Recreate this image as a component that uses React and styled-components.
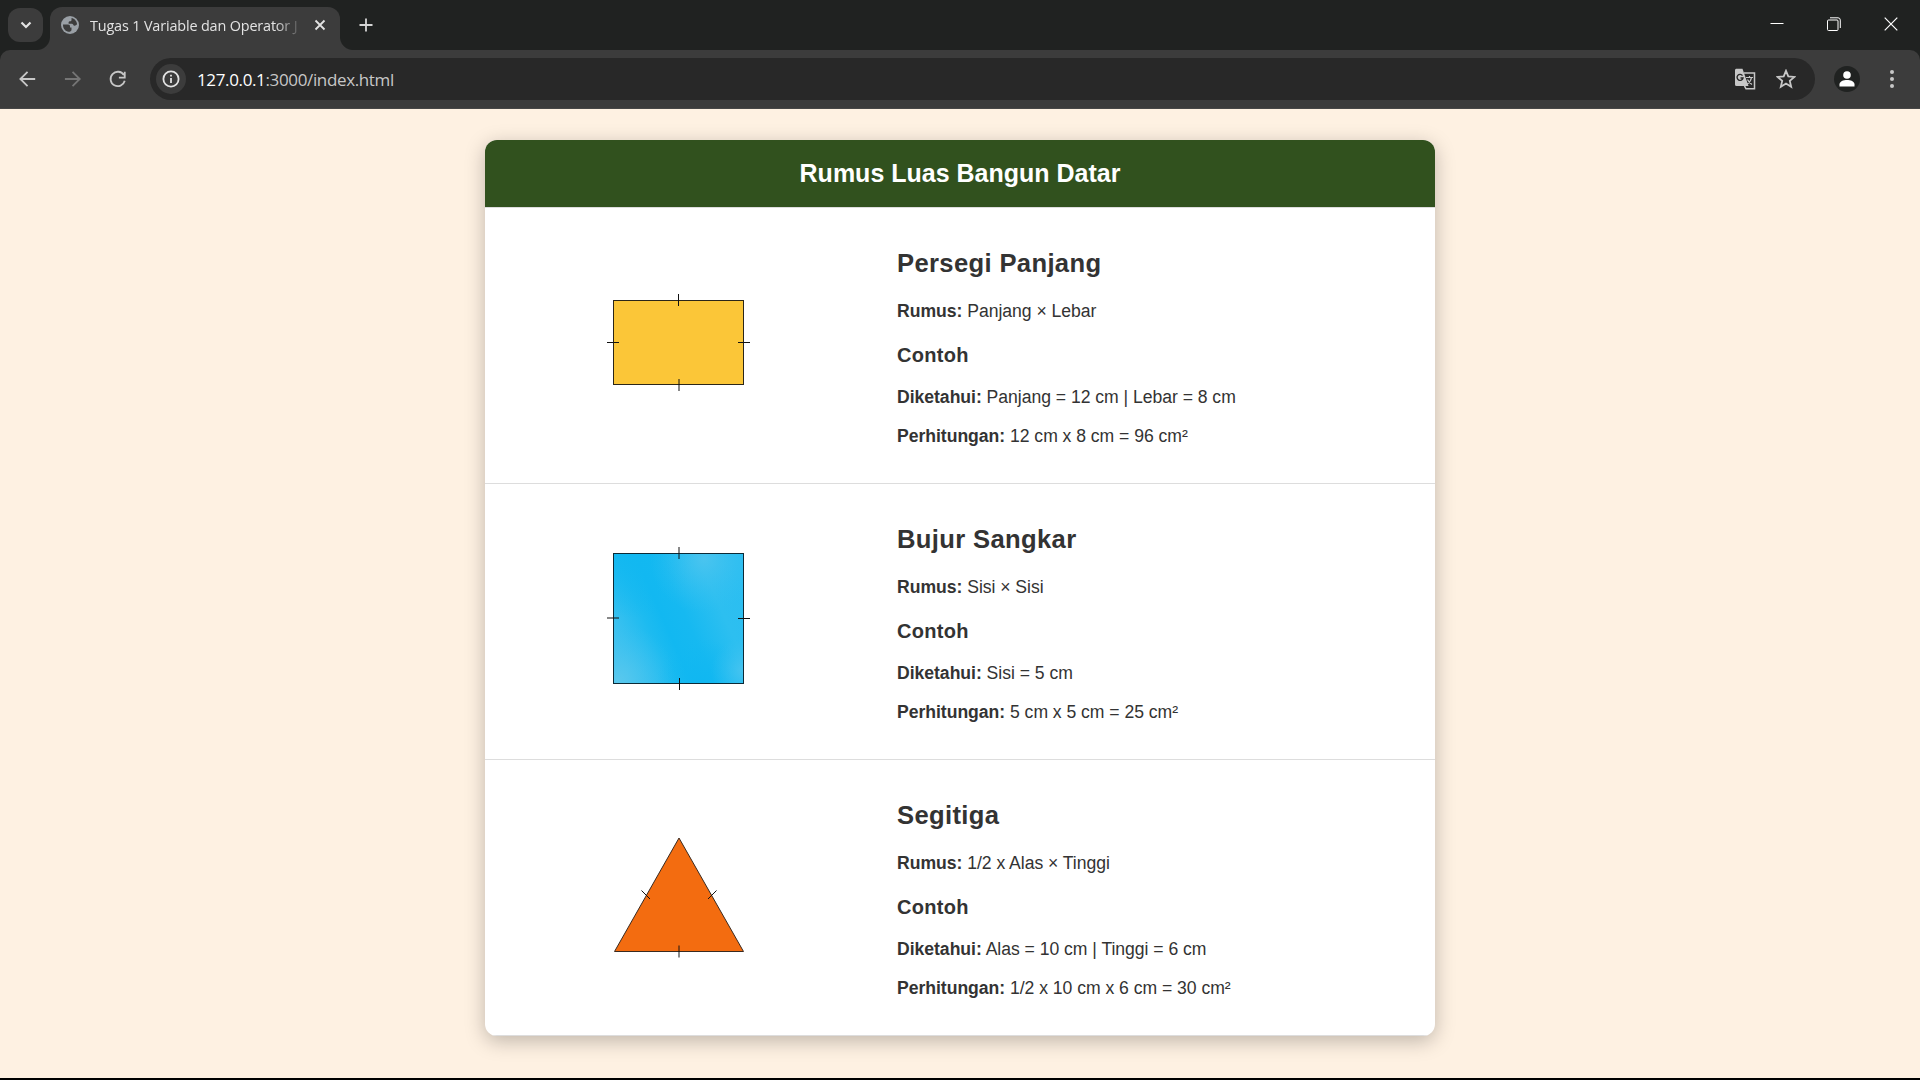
import React from 'react';
import styled, { createGlobalStyle } from 'styled-components';

const Global = createGlobalStyle`
  * { box-sizing: border-box; }
  body { margin: 0; background: #000; overflow: hidden; }
`;

const Window = styled.div`
  display: flex;
  flex-direction: column;
  width: 1920px;
  height: 1080px;
  font-family: 'Open Sans', 'Noto Sans', sans-serif;
  background: #000;
`;

const TabStrip = styled.div`
  display: flex;
  height: 50px;
  padding-left: 8px;
  background: #202221;
`;

const TabSearch = styled.div`
  display: grid;
  place-items: center;
  width: 35px;
  height: 34px;
  margin-top: 8px;
  border-radius: 12px;
  background: #3c3c3c;
`;

const Tab = styled.div`
  position: relative;
  display: flex;
  align-items: center;
  width: 290px;
  height: 43px;
  margin: 7px 0 0 7px;
  padding: 0 0 7px 11px;
  border-radius: 12px 12px 0 0;
  background: #3c3c3c;
  &::before,
  &::after {
    content: '';
    position: absolute;
    bottom: 0;
    width: 13px;
    height: 13px;
  }
  &::before {
    left: -13px;
    background: radial-gradient(circle at 0 0, transparent 12.5px, #3c3c3c 13.5px);
  }
  &::after {
    right: -13px;
    background: radial-gradient(circle at 100% 0, transparent 12.5px, #3c3c3c 13.5px);
  }
`;

const TabTitle = styled.span`
  width: 212px;
  margin-left: 11px;
  padding-top: 2px;
  white-space: nowrap;
  font-size: 14.4px;
  line-height: 20px;
  letter-spacing: -0.15px;
  color: #e3e3e3;
  mask-image: linear-gradient(90deg, #000 185px, transparent 213px);
`;

const TabClose = styled.span`
  display: flex;
  margin-left: 12px;
`;

const NewTab = styled.div`
  display: flex;
  margin: 18px 0 0 19px;
  height: 14px;
`;

const WindowButtons = styled.div`
  display: flex;
  align-items: center;
  gap: 43px;
  margin-left: auto;
  padding: 0 22px 2px 0;
`;

const ToolbarBack = styled.div`
  height: 59px;
  background: #202221;
`;

const Toolbar = styled.div`
  display: flex;
  align-items: center;
  height: 59px;
  padding: 0 20px 1px 19px;
  border-radius: 10px 10px 0 0;
  border-bottom: 1px solid #474747;
  background: #3c3c3c;
`;

const NavIcons = styled.div`
  display: flex;
  align-items: center;
  gap: 27px;
  width: 131px;
`;

const AddressBar = styled.div`
  display: flex;
  align-items: center;
  width: 1665px;
  height: 42px;
  padding: 0 19px 0 6px;
  border-radius: 21px;
  background: #282828;
`;

const SiteInfo = styled.div`
  display: grid;
  place-items: center;
  width: 30px;
  height: 30px;
  border-radius: 50%;
  background: #3c3c3c;
`;

const Url = styled.span`
  margin-left: 11px;
  padding-top: 2px;
  font-size: 17px;
  line-height: 24px;
  letter-spacing: -0.36px;
  color: #c7c7c7;
  b { font-weight: 400; color: #fff; }
`;

const BarActions = styled.div`
  display: flex;
  align-items: center;
  gap: 20px;
  margin-left: auto;
`;

const Profile = styled.div`
  display: grid;
  place-items: center;
  width: 26px;
  height: 26px;
  margin-left: 19px;
  border-radius: 50%;
  background: #202221;
`;

const MenuDots = styled.svg`
  margin-left: auto;
  margin-right: 6px;
`;

const Page = styled.main`
  display: flex;
  justify-content: center;
  align-items: flex-start;
  height: 969px;
  padding-top: 31px;
  background: #fef1e2;
  font-family: Arial, 'Liberation Sans', sans-serif;
  color: #333;
`;

const Card = styled.section`
  width: 950px;
  height: 896px;
  border-radius: 12px;
  overflow: hidden;
  background: #fff;
  box-shadow: 0 5px 20px rgba(0, 0, 0, 0.25);
`;

const CardHeader = styled.h1`
  height: 68px;
  margin: 0;
  border-bottom: 1px solid #ddd;
  text-align: center;
  font-size: 25px;
  font-weight: 700;
  line-height: 67px;
  color: #fff;
  background: #31511e;
`;

const Row = styled.article`
  display: grid;
  grid-template-columns: 387px 1fr;
  height: 276px;
  border-bottom: 1px solid #ddd;
`;

const Figure = styled.div`
  display: grid;
  place-items: center;
  padding: 0 1px 7px 0;
`;

const Details = styled.div`
  padding: 39px 25px 0;
`;

const ShapeName = styled.h2`
  margin: 0 0 20px;
  font-size: 25.6px;
  line-height: 32px;
  letter-spacing: 0.35px;
`;

const ExampleTitle = styled.h3`
  margin: 20px 0 18px;
  font-size: 20px;
  line-height: 24px;
  letter-spacing: 0.3px;
`;

const Line = styled.p`
  margin: 0 0 15px;
  font-size: 17.6px;
  line-height: 24px;
  letter-spacing: -0.03px;
`;

const ink = { stroke: '#111', strokeWidth: 1 };

const Rectangle = () => (
  <svg width="150" height="110" viewBox="0 0 150 110">
    <rect x="10.5" y="13.5" width="130" height="84" fill="#fbc638" stroke="#2b2618" />
    <path d="M75.5 7v12M4 55.5h12M135 55.5h12" {...ink} />
    <path d="M76 92v12" stroke="#111" strokeOpacity=".5" strokeWidth="2" />
  </svg>
);

const Square = () => (
  <svg width="150" height="150" viewBox="0 0 150 150">
    <defs>
      <linearGradient id="sheen" x1="0" y1=".72" x2="1" y2=".28">
        <stop offset="0" stopColor="#45c3ef" />
        <stop offset=".28" stopColor="#1dbbf0" />
        <stop offset=".4" stopColor="#12b8f1" />
        <stop offset=".55" stopColor="#16b9f1" />
        <stop offset=".8" stopColor="#2dbff0" />
        <stop offset="1" stopColor="#2bbef1" />
      </linearGradient>
      <radialGradient id="glowTop" cx=".7" cy=".04" r=".42">
        <stop offset="0" stopColor="#4fc5ef" stopOpacity=".85" />
        <stop offset="1" stopColor="#35c0f0" stopOpacity="0" />
      </radialGradient>
      <radialGradient id="glowLeft" cx=".03" cy=".98" r=".45">
        <stop offset="0" stopColor="#5ac8ed" />
        <stop offset="1" stopColor="#35c0f0" stopOpacity="0" />
      </radialGradient>
      <radialGradient id="glowRight" cx="1" cy=".9" r=".25">
        <stop offset="0" stopColor="#46c4f0" />
        <stop offset="1" stopColor="#35c0f0" stopOpacity="0" />
      </radialGradient>
      <radialGradient id="deepCorner" cx=".12" cy="0" r=".5">
        <stop offset="0" stopColor="#12b8f1" />
        <stop offset="1" stopColor="#12b8f1" stopOpacity="0" />
      </radialGradient>
      <radialGradient id="deepBase" cx=".68" cy="1" r=".35">
        <stop offset="0" stopColor="#10b7f1" />
        <stop offset="1" stopColor="#12b8f1" stopOpacity="0" />
      </radialGradient>
    </defs>
    {['sheen', 'deepCorner', 'deepBase', 'glowTop', 'glowLeft', 'glowRight'].map((id) => (
      <rect key={id} x="10.5" y="10.5" width="130" height="130" fill={`url(#${id})`} />
    ))}
    <rect x="10.5" y="10.5" width="130" height="130" fill="none" stroke="#0c2a36" />
    <path d="M135 75.5h12M76.5 135v12" {...ink} />
    <path d="M76 4v12M4 75h12" stroke="#111" strokeOpacity=".5" strokeWidth="2" />
  </svg>
);

const Triangle = () => (
  <svg width="150" height="150" viewBox="0 0 150 150">
    <path d="M76 19L140.5 132.5H11.5Z" fill="#f36c10" stroke="#3a2a20" />
    <path d="M38.5 71.5l8.500 8.500M113.5 71.5l-8.500 8.500" {...ink} />
    <path d="M76 126.5v12" stroke="#111" strokeOpacity=".65" strokeWidth="1.5" />
  </svg>
);

const shapes = [
  {
    name: 'Persegi Panjang',
    Drawing: Rectangle,
    formula: 'Panjang × Lebar',
    given: 'Panjang = 12 cm | Lebar = 8 cm',
    result: '12 cm x 8 cm = 96 cm²',
  },
  {
    name: 'Bujur Sangkar',
    Drawing: Square,
    formula: 'Sisi × Sisi',
    given: 'Sisi = 5 cm',
    result: '5 cm x 5 cm = 25 cm²',
  },
  {
    name: 'Segitiga',
    Drawing: Triangle,
    formula: '1/2 x Alas × Tinggi',
    given: 'Alas = 10 cm | Tinggi = 6 cm',
    result: '1/2 x 10 cm x 6 cm = 30 cm²',
  },
];

const Svg = ({ size = 20, color = '#c7c7c7', width = 2, children }) => (
  <svg width={size} height={size} viewBox="0 0 20 20" fill="none" stroke={color} strokeWidth={width}>
    {children}
  </svg>
);

function BrowserChrome() {
  return (
    <>
      <TabStrip>
        <TabSearch>
          <Svg color="#e3e3e3" width={2.2}><path d="M5.5 7.5l4.500 4.500 4.500-4.500" /></Svg>
        </TabSearch>
        <Tab>
          <svg width="18" height="18" viewBox="0 0 18 18">
            <circle cx="9" cy="9" r="9" fill="#9aa0a6" />
            <path
              d="M2 8.500h5c1.600 0 2 .8 2 2v1h1.500v2.600c0 .6-.7.900-1.500 1.700C5 16 1.800 13 2 8.500zM10.500 2c3 .4 5.300 3.200 5.600 6.300-.8.900-1.700 1.500-2.600 1.400-1.500 0-1-1.700-2.400-1.900H7.600V6.500c0-1 .6-1.300 2-1.300.9 0 1-.7.900-3.200z"
              fill="#3c3c3c"
            />
          </svg>
          <TabTitle>Tugas 1 Variable dan Operator J</TabTitle>
          <TabClose>
            <svg width="12" height="12" viewBox="0 0 12 12" stroke="#e3e3e3" strokeWidth="1.8">
              <path d="M1.5 1.5l9 9M10.5 1.5l-9 9" />
            </svg>
          </TabClose>
        </Tab>
        <NewTab>
          <svg width="14" height="14" viewBox="0 0 14 14" stroke="#d5d5d5" strokeWidth="1.8">
            <path d="M7 .5v13M.5 7h13" />
          </svg>
        </NewTab>
        <WindowButtons>
          <svg width="14" height="14" viewBox="0 0 14 14"><path d="M.5 6.500h13" stroke="#fff" /></svg>
          <svg width="14" height="14" viewBox="0 0 14 14" fill="none" stroke="#fff">
            <rect x=".5" y="3" width="10.5" height="10.5" rx="1" />
            <path d="M3 .8h8a2.300 2.300 0 0 1 2.300 2.300V11" />
          </svg>
          <svg width="14" height="14" viewBox="0 0 14 14" stroke="#fff" strokeWidth="1.2">
            <path d="M.7.7l12.600 12.600M13.300.7L.7 13.300" />
          </svg>
        </WindowButtons>
      </TabStrip>
      <ToolbarBack>
        <Toolbar>
          <NavIcons>
            <Svg size={18}><path d="M18 10H2M9.500 2L1.500 10l8 8" /></Svg>
            <Svg size={18} color="#757575"><path d="M1 10h16.500M9.500 2l8 8-8 8" /></Svg>
            <Svg size={18}><path d="M16.500 5.600A8 8 0 1 0 17.500 12M17.500 2v6.500H11" /></Svg>
          </NavIcons>
          <AddressBar>
            <SiteInfo>
              <svg width="18" height="18" viewBox="0 0 18 18" fill="none" stroke="#e3e3e3" strokeWidth="1.8">
                <circle cx="9" cy="9" r="7.6" />
                <path d="M9 8v5M9 4.800v1.800" />
              </svg>
            </SiteInfo>
            <Url><b>127.0.0.1</b>:3000/index.html</Url>
            <BarActions>
              <svg width="22" height="22" viewBox="0 0 22 22">
                <path d="M2 .8h6.500L14.500 18H2.500A1.500 1.500 0 0 1 1 16.500v-14A1.500 1.500 0 0 1 2 .8z" fill="#c7c7c7" />
                <path d="M10 5h10.500v15.800H12l-1.500-3" fill="none" stroke="#c7c7c7" strokeWidth="1.5" />
                <path d="M8.500 7.600A3 3 0 1 0 9 10H6.500" fill="none" stroke="#282828" strokeWidth="1.4" />
                <path d="M12 9.500h7M15.500 8v1.500M17.500 9.500c-.5 3-2.500 5.500-4.500 7M13.500 11.500c1 2 2.500 3.800 4.500 5" fill="none" stroke="#c7c7c7" strokeWidth="1.2" />
              </svg>
              <Svg width={1.8}>
                <path d="M10 1.800l2.300 5.600 6.100.5-4.600 4 1.400 5.900-5.200-3.200-5.200 3.200 1.400-5.900-4.600-4 6.100-.5z" />
              </Svg>
            </BarActions>
          </AddressBar>
          <Profile>
            <svg width="16" height="16" viewBox="0 0 16 16" fill="#fff">
              <circle cx="8" cy="4" r="3.8" />
              <path d="M.5 15.500v-2.300C.5 10.500 4.500 9 8 9s7.500 1.500 7.500 4.200v2.300z" />
            </svg>
          </Profile>
          <MenuDots width="4" height="18" viewBox="0 0 4 18" fill="#c7c7c7">
            <circle cx="2" cy="2" r="2" />
            <circle cx="2" cy="9" r="2" />
            <circle cx="2" cy="16" r="2" />
          </MenuDots>
        </Toolbar>
      </ToolbarBack>
    </>
  );
}

export default function App() {
  return (
    <Window>
      <Global />
      <BrowserChrome />
      <Page>
        <Card>
          <CardHeader>Rumus Luas Bangun Datar</CardHeader>
          {shapes.map(({ name, Drawing, formula, given, result }) => (
            <Row key={name}>
              <Figure><Drawing /></Figure>
              <Details>
                <ShapeName>{name}</ShapeName>
                <Line><strong>Rumus:</strong> {formula}</Line>
                <ExampleTitle>Contoh</ExampleTitle>
                <Line><strong>Diketahui:</strong> {given}</Line>
                <Line><strong>Perhitungan:</strong> {result}</Line>
              </Details>
            </Row>
          ))}
        </Card>
      </Page>
    </Window>
  );
}
